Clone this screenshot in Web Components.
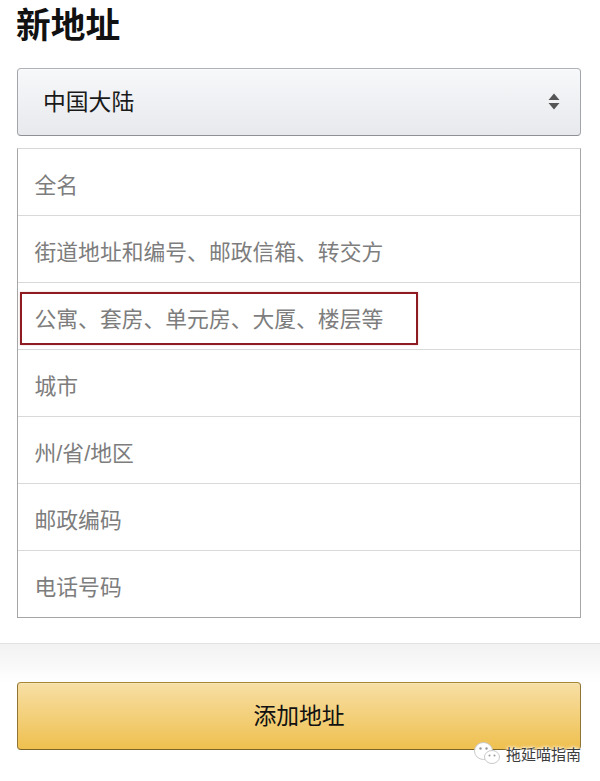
<!DOCTYPE html>
<html lang="zh-CN">
<head>
<meta charset="utf-8">
<title>新地址</title>
<style>
html,body{margin:0;padding:0;background:#fff;}
body{width:600px;height:781px;overflow:hidden;position:relative;font-family:"Liberation Sans","Noto Sans CJK SC",sans-serif;}
</style>
</head>
<body>
<addr-page>
  <addr-title>新地址</addr-title>
  <addr-select>中国大陆</addr-select>
  <addr-fields>
    <addr-field>全名</addr-field>
    <addr-field>街道地址和编号、邮政信箱、转交方</addr-field>
    <addr-field marked>公寓、套房、单元房、大厦、楼层等</addr-field>
    <addr-field>城市</addr-field>
    <addr-field>州/省/地区</addr-field>
    <addr-field>邮政编码</addr-field>
    <addr-field>电话号码</addr-field>
  </addr-fields>
  <addr-footer><addr-button>添加地址</addr-button></addr-footer>
</addr-page>
<addr-watermark>拖延喵指南</addr-watermark>
<script>
function def(name, css, html){
  customElements.define(name, class extends HTMLElement{
    constructor(){
      super();
      this.attachShadow({mode:'open'}).innerHTML='<style>'+css+'</style>'+html;
    }
  });
}
const CJK='"Liberation Sans","Noto Sans CJK SC",sans-serif';
def('addr-page',':host{display:flex;flex-direction:column;height:781px;font-family:'+CJK+';}','<slot></slot>');
def('addr-title',':host{display:block;margin:5px 16px 0;height:63px;font-size:34.7px;line-height:42px;font-weight:700;color:#111;}','<slot></slot>');
def('addr-select',`:host{display:flex;align-items:center;justify-content:space-between;box-sizing:border-box;margin:0 19px 0 17px;height:68px;padding:0 20px 3px 25px;border:1px solid #a2a6ac;border-top-color:#adb1b8;border-bottom-color:#8d9096;border-radius:4px;background:linear-gradient(#f7f8fa,#e7e9ec);font-size:22.8px;color:#1a1a1a;box-shadow:inset 0 1px 0 #fbfbfc;}
svg{display:block;flex:none;position:relative;top:1px;}`,'<slot></slot><svg width="12" height="17" viewBox="0 0 12 17"><path d="M6 0.5 11.5 7H0.5Z M0.5 10H11.5L6 16.5Z" fill="#555"/></svg>');
def('addr-fields',':host{display:block;box-sizing:border-box;margin:12px 19px 0 17px;border:1px solid #a6a6a6;border-top-color:#d8d8d8;}','<slot></slot>');
def('addr-field',`:host{display:flex;align-items:center;position:relative;box-sizing:border-box;height:67px;padding:3px 0 0 16.5px;font-size:21.8px;color:#7d7d7d;border-bottom:1px solid #d9d9d9;background:#fff;}
:host(:last-child){border-bottom:0;height:66px;}
.mark{display:none;position:absolute;left:2px;top:9px;width:398px;height:53px;box-sizing:border-box;border:2px solid #8e1b22;box-shadow:0 0 2px rgba(180,60,60,.3);}
:host([marked]) .mark{display:block;}`,'<slot></slot><span class="mark"></span>');
def('addr-footer',`:host{display:block;margin-top:25px;flex:1;padding:38px 19px 0 17px;border-top:1px solid #e2e2e2;background:linear-gradient(#f2f2f2,#fefefe 36px,#fff 40px);}`,'<slot></slot>');
def('addr-button',`:host{display:flex;align-items:center;justify-content:center;box-sizing:border-box;height:68px;padding-bottom:4px;border:1px solid #8f7434;border-top-color:#a88734;border-bottom-color:#7b6428;border-radius:4px;background:linear-gradient(#f7dfa5,#efc04f);font-size:22.8px;color:#111;box-shadow:inset 0 1px 0 #fae6b4;}`,'<slot></slot>');
def('addr-watermark',`:host{position:absolute;left:474px;top:740px;display:flex;align-items:center;gap:5px;height:26px;font-size:15px;color:#3c3c3c;text-shadow:0 0 2px #fff,0 0 3px #fff,0 0 4px #fff;font-family:`+CJK+`;}
svg{display:block;flex:none;}`,'<svg width="27" height="24" viewBox="0 0 27 24"><ellipse cx="9.5" cy="10" rx="9" ry="8.5" fill="#fff" stroke="#c9c9c9" stroke-width="1"/><ellipse cx="18" cy="16" rx="7.5" ry="6.5" fill="#fff" stroke="#c9c9c9" stroke-width="1"/><circle cx="6.5" cy="7.5" r="1.2" fill="#999"/><circle cx="12.5" cy="7.5" r="1.2" fill="#999"/><circle cx="15.5" cy="14.5" r="1" fill="#999"/><circle cx="20.5" cy="14.5" r="1" fill="#999"/></svg><slot></slot>');
</script>
</body>
</html>
